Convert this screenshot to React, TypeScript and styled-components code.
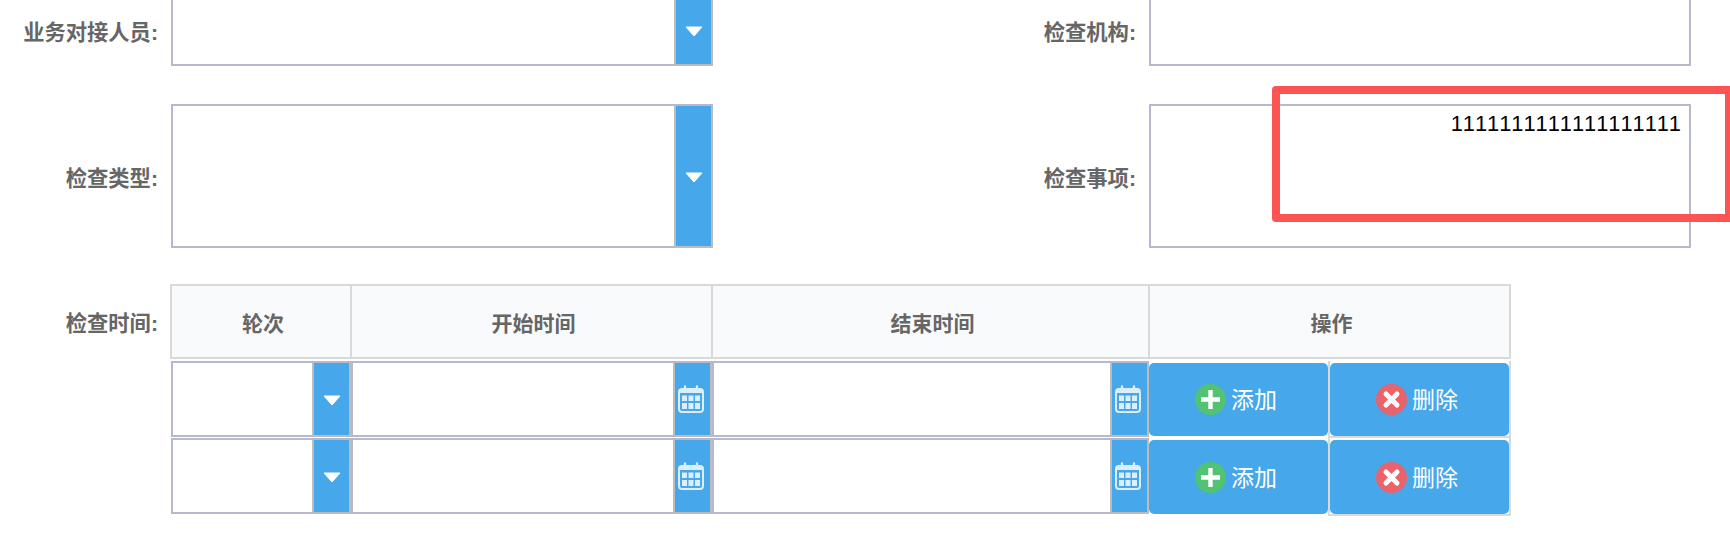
import styled, { createGlobalStyle } from 'styled-components';

const GlobalStyle = createGlobalStyle`
  html, body {
    margin: 0;
    padding: 0;
    height: 534px;
    overflow: hidden;
    background: #fff;
  }
`;

const Page = styled.div`
  position: relative;
  width: 1730px;
  height: 534px;
  overflow: hidden;
  font-family: "Liberation Sans", "Noto Sans CJK SC", sans-serif;
`;

const Form = styled.div`
  display: flex;
  flex-direction: column;
  margin-top: -6px;
`;

const FormRow = styled.div<{ $height: number; $gap: number }>`
  display: flex;
  height: ${(p) => p.$height}px;
  margin-bottom: ${(p) => p.$gap}px;
`;

const Label = styled.div<{ $width: number }>`
  flex: none;
  width: ${(p) => p.$width}px;
  margin-right: 13px;
  display: flex;
  align-items: center;
  justify-content: flex-end;
  font-size: 21.3px;
  font-weight: 700;
  color: #666;
`;

const TableLabel = styled(Label)`
  height: 75px;
  margin-right: 12px;
`;

const Control = styled.div`
  flex: none;
  box-sizing: border-box;
  width: 542px;
  height: 100%;
  display: flex;
  border: 2px solid #b6b9cd;
  background: #fff;
`;

const ControlBody = styled.div`
  flex: 1;
  min-width: 0;
  padding: 6px 8px 0 0;
  text-align: right;
  font-size: 21.8px;
  line-height: 24px;
  font-kerning: none;
  color: #000;
`;

const SideButton = styled.div`
  flex: none;
  box-sizing: border-box;
  width: 39px;
  margin-bottom: -2px;
  margin-right: -2px;
  padding-top: 3px;
  display: flex;
  align-items: center;
  justify-content: center;
  background: #46a7ea;
  border-left: 2px solid #bcbcbc;
  border-right: 2px solid #bcbcbc;
  border-bottom: 2px solid #bcbcbc;
`;

const Annotation = styled.div`
  position: absolute;
  left: 1272px;
  top: 86px;
  width: 461px;
  height: 136px;
  box-sizing: border-box;
  border: 8px solid #fc5353;
  border-radius: 4px;
`;

const TableRow = styled.div`
  display: flex;
  margin-top: -2px;
`;

const Table = styled.div`
  width: 1341px;
`;

const TableHead = styled.div`
  display: grid;
  grid-template-columns: 182px 361px 437px 361px;
  height: 75px;
  box-sizing: border-box;
  border-top: 2px solid #d9d9d9;
  border-bottom: 2px solid #d9d9d9;
  margin-bottom: 2px;
`;

const HeadCell = styled.div`
  display: flex;
  align-items: center;
  justify-content: center;
  padding-left: 4px;
  background: #f9fafc;
  border-right: 2px solid #d9d9d9;
  font-size: 21px;
  font-weight: 700;
  color: #666;

  &:first-child {
    border-left: 2px solid #d9d9d9;
  }
`;

const DataRow = styled.div`
  display: grid;
  grid-template-columns: 180px 361px 437px 362px;
  grid-template-rows: 76px;
  height: 76px;
  margin-bottom: 1px;
  padding-left: 1px;
`;

const CellControl = styled(Control)`
  width: 100%;
`;

const Actions = styled.div`
  display: flex;
  height: 77px;

  ${DataRow}:last-child & {
    height: 78px;
  }
`;

const ActionCell = styled.div<{ $bordered?: boolean }>`
  flex: none;
  display: flex;
  box-sizing: border-box;
  width: ${(p) => (p.$bordered ? 183 : 179)}px;
  padding-top: 2px;
  padding-bottom: ${(p) => (p.$bordered ? 0 : 2)}px;
  ${(p) =>
    p.$bordered &&
    `
    border-left: 2px solid #d9d9d9;
    border-right: 2px solid #d9d9d9;
    border-bottom: 2px solid #d9d9d9;
  `}
`;

const ActionButton = styled.div`
  flex: 1;
  display: flex;
  align-items: center;
  justify-content: center;
  gap: 5px;
  padding-right: 5px;
  background: #46a7ea;
  border-radius: 5px;
  font-size: 23px;
  color: #fff;
`;

const ActionText = styled.span`
  padding-bottom: 3px;
`;

const CalendarSvg = styled.svg`
  margin-right: 3px;
  margin-bottom: 3px;
`;

const Arrow = () => (
  <svg width="18" height="11" viewBox="0 0 18 11">
    <path d="M1 1h16l-8 9z" fill="#fff" stroke="#fff" strokeLinejoin="round" />
  </svg>
);

const CalendarIcon = () => (
  <CalendarSvg width="26" height="28" viewBox="0 0 26 28" fill="none">
    <rect x="1" y="4" width="24" height="23" rx="3" stroke="#dcedfb" strokeWidth="2" />
    <path d="M2 5h22v3H2z" fill="#dcedfb" />
    <path d="M7 1.5v4.5M19 1.5v4.5" stroke="#dcedfb" strokeWidth="2.4" strokeLinecap="round" />
    <path
      d="M4 10.5h5v5.5H4zM10.5 10.5h5v5.5h-5zM17 10.5h5v5.5h-5zM4 18h5v6H4zM10.5 18h5v6h-5zM17 18h5v6h-5z"
      fill="#dcedfb"
    />
  </CalendarSvg>
);

const AddIcon = () => (
  <svg width="31" height="31" viewBox="0 0 31 31">
    <circle cx="15.5" cy="15.5" r="15.5" fill="#52c374" />
    <path d="M15.5 6v19M6 15.5h19" stroke="#fff" strokeWidth="4.4" />
  </svg>
);

const RemoveIcon = () => (
  <svg width="31" height="31" viewBox="0 0 31 31">
    <circle cx="15.5" cy="15.5" r="15.5" fill="#e8636b" />
    <path d="M10 10l11 11M21 10L10 21" stroke="#fff" strokeWidth="5" strokeLinecap="round" />
  </svg>
);

function TimeRow() {
  return (
    <DataRow>
      <CellControl>
        <ControlBody />
        <SideButton>
          <Arrow />
        </SideButton>
      </CellControl>
      <CellControl>
        <ControlBody />
        <SideButton>
          <CalendarIcon />
        </SideButton>
      </CellControl>
      <CellControl>
        <ControlBody />
        <SideButton>
          <CalendarIcon />
        </SideButton>
      </CellControl>
      <Actions>
        <ActionCell>
          <ActionButton>
            <AddIcon />
            <ActionText>添加</ActionText>
          </ActionButton>
        </ActionCell>
        <ActionCell $bordered>
          <ActionButton>
            <RemoveIcon />
            <ActionText>删除</ActionText>
          </ActionButton>
        </ActionCell>
      </Actions>
    </DataRow>
  );
}

export default function App() {
  return (
    <Page>
      <GlobalStyle />
      <Form>
        <FormRow $height={72} $gap={38}>
          <Label $width={158}>业务对接人员:</Label>
          <Control>
            <ControlBody />
            <SideButton>
              <Arrow />
            </SideButton>
          </Control>
          <Label $width={423}>检查机构:</Label>
          <Control>
            <ControlBody />
          </Control>
        </FormRow>
        <FormRow $height={144} $gap={38}>
          <Label $width={158}>检查类型:</Label>
          <Control>
            <ControlBody />
            <SideButton>
              <Arrow />
            </SideButton>
          </Control>
          <Label $width={423}>检查事项:</Label>
          <Control>
            <ControlBody>1111111111111111111</ControlBody>
          </Control>
        </FormRow>
        <TableRow>
          <TableLabel $width={158}>检查时间:</TableLabel>
          <Table>
            <TableHead>
              <HeadCell>轮次</HeadCell>
              <HeadCell>开始时间</HeadCell>
              <HeadCell>结束时间</HeadCell>
              <HeadCell>操作</HeadCell>
            </TableHead>
            <TimeRow />
            <TimeRow />
          </Table>
        </TableRow>
      </Form>
      <Annotation />
    </Page>
  );
}
